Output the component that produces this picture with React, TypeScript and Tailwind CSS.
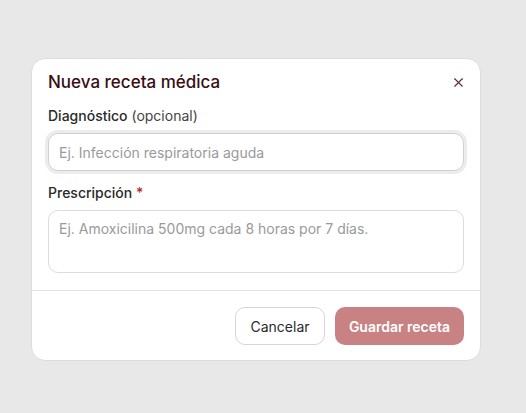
import { X } from 'lucide-react'

export default function App() {
  return (
    <div
      className="min-h-screen w-full bg-[#e8e8e8] pl-[31px] pt-[58px]"
      style={{ fontFamily: 'Inter, "Noto Sans", sans-serif' }}
    >
      <div className="w-[450px] rounded-[14px] border border-[#dcdcdc] bg-white">
        {/* Body */}
        <div className="px-4 pt-[12px] pb-[17px]">
          <div className="flex items-center justify-between">
            <h2 className="text-[17px] leading-[22px] font-medium text-[#3a0d13]">
              Nueva receta médica
            </h2>
            <button className="-mr-[2px] text-[#5b2a30]">
              <X className="h-[15px] w-[15px]" strokeWidth={1.8} />
            </button>
          </div>

          <label className="mt-[13px] block text-[14px] leading-5 text-[#2a2a2a]">
            <span className="font-medium">Diagnóstico</span>{' '}
            <span className="text-[#444]">(opcional)</span>
          </label>
          <input
            type="text"
            placeholder="Ej. Infección respiratoria aguda"
            className="mt-[7px] h-[38px] w-full rounded-[10px] border border-[#cfcfcf] px-[10px] text-[14px] text-[#222] placeholder-[#9a9a9a] outline-none shadow-[0_0_0_3px_#ececec]"
          />

          <label className="mt-[12px] block text-[14px] leading-5 font-medium text-[#2a2a2a]">
            Prescripción <span className="text-[#b3262e]">*</span>
          </label>
          <textarea
            placeholder="Ej. Amoxicilina 500mg cada 8 horas por 7 días."
            className="mt-[7px] block h-[63px] w-full resize-none rounded-[10px] border border-[#dcdcdc] px-[10px] py-[8px] text-[14px] leading-5 placeholder-[#9a9a9a] outline-none"
          />
        </div>

        {/* Footer */}
        <div className="flex justify-end gap-[10px] border-t border-[#e3e3e3] px-4 pt-[16px] pb-[15px]">
          <button className="h-[38px] w-[90px] rounded-[10px] border border-[#d6d6d6] bg-white text-[14px] text-[#2a2a2a]">
            Cancelar
          </button>
          <button className="h-[38px] w-[129px] rounded-[10px] bg-[#c98283] text-[14px] font-semibold text-white">
            Guardar receta
          </button>
        </div>
      </div>
    </div>
  )
}
